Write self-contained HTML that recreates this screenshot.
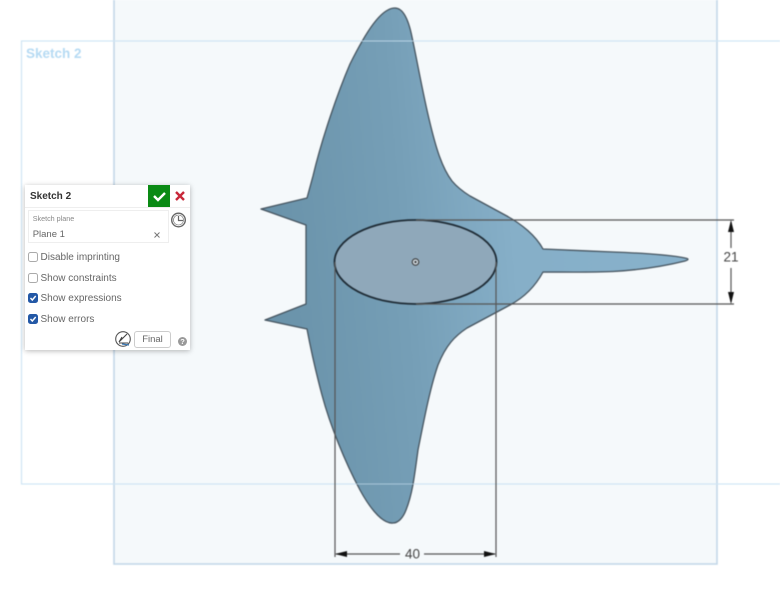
<!DOCTYPE html>
<html><head><meta charset="utf-8"><style>
html,body{margin:0;padding:0;background:#fff}
body{width:780px;height:597px;position:relative;overflow:hidden;font-family:"Liberation Sans",sans-serif}
svg.m{position:absolute;left:0;top:0;filter:blur(.45px)}
.p{position:absolute;left:25px;top:185px;width:165px;height:165px;background:#fff;box-shadow:0 1px 5px rgba(0,0,0,.28);filter:blur(.35px)}
.t{position:absolute;white-space:nowrap;color:#666;font-size:10px;line-height:12px}
.c{position:absolute;left:3px;width:10px;height:10px;border-radius:2.5px;box-sizing:border-box;border:1px solid #aaa;background:#fff}
.c.on{background:#2358a6;border-color:#2358a6}
.c svg{position:absolute;left:-1px;top:-1px}
</style></head><body>
<svg class="m" width="780" height="597" viewBox="0 0 780 597">
<defs><linearGradient id="g" x1="0" y1="0.1" x2="1" y2="0">
<stop offset="0" stop-color="#6a93aa"/><stop offset=".3" stop-color="#769fb7"/><stop offset=".55" stop-color="#86afc8"/><stop offset="1" stop-color="#88b2cc"/></linearGradient></defs>
<rect x="114" y="-3" width="603" height="567" fill="#f5f9fb" stroke="#c3d7e8" stroke-width="1.6"/>
<rect x="21.5" y="41" width="770" height="443" fill="none" stroke="#cfe5f4" stroke-width="1.2"/>
<text x="26" y="58" font-family="Liberation Sans,sans-serif" font-size="13.5" font-weight="700" fill="#b5daf3">Sketch 2</text>
<path d="M395 8C404 8 409 22 412 37C417 60 423 95 430 123C436 148 442 168 452 181C457 187 462 191 470 196L505 215C522 224 536 236 543 249C565 250 590 251 613 252C640 253 670 255 685 258Q691 259 685 261C665 266 640 270 613 271.500C590 272.500 565 272 543 272C536 285 525 297 510 305L467 328C455 336 446 345 438 365C430 388 424 420 418 450C414 480 412 495 406 510C403 518 398 523 393 523C384 524 372 512 360 490C345 462 330 425 322 395C314 365 310 345 307 329L265 320L306 304V225L261 209L307 198L313 176C322 138 338 92 350 64C366 32 381 8 395 8Z" fill="url(#g)" stroke="#45545f" stroke-width="1.3" stroke-linejoin="round"/>
<line x1="114" y1="41" x2="717" y2="41" stroke="#cfe5f4" stroke-width="1" opacity=".75"/>
<line x1="114" y1="484" x2="717" y2="484" stroke="#cfe5f4" stroke-width="1" opacity=".6"/>
<ellipse cx="415.500" cy="262" rx="81" ry="42" fill="#8fa8ba" stroke="#1f2c36" stroke-width="1.8"/>
<circle cx="415.500" cy="262" r="3.300" fill="#c9d2d8" stroke="#333" stroke-width="1"/><circle cx="415.500" cy="262" r="1" fill="#222"/>
<g stroke="#555" stroke-width="1.2" fill="none">
<path d="M416 220H734M416 304H734"/>
<path d="M335 262V557M496 262V557"/>
<path d="M731 222V248M731 268V302"/>
<path d="M336 554H400M424 554H495"/>
</g>
<g fill="#111"><path d="M731 220L728 232H734ZM731 304L728 292H734ZM335 554L347 551V557ZM496 554L484 551V557Z"/></g>
<text x="731" y="261.500" text-anchor="middle" font-family="Liberation Sans,sans-serif" font-size="13.500" fill="#444">21</text>
<text x="412.500" y="558.500" text-anchor="middle" font-family="Liberation Sans,sans-serif" font-size="13.500" fill="#444">40</text>
</svg>
<div class="p">
<div class="t" style="left:5px;top:5.500px;font-size:10px;font-weight:700;color:#333">Sketch 2</div>
<div style="position:absolute;left:0;top:22px;width:165px;height:1px;background:#eee"></div>
<div style="position:absolute;left:123px;top:0;width:22px;height:22px;background:#0a8a14"></div>
<svg style="position:absolute;left:123px;top:0" width="22" height="22"><path d="M6 11L10 15L17 8" fill="none" stroke="#fff" stroke-width="2.400"/></svg>
<svg style="position:absolute;left:149px;top:5px" width="12" height="12"><path d="M2 2L10 10M10 2L2 10" stroke="#c8283a" stroke-width="2.400"/></svg>
<div style="position:absolute;left:3px;top:25px;width:141px;height:33px;box-sizing:border-box;border:1px solid #eee"></div>
<div class="t" style="left:7.700px;top:29px;font-size:7.200px;line-height:10px;color:#888">Sketch plane</div>
<div class="t" style="left:7.700px;top:43.500px;font-size:9.500px;color:#666">Plane 1</div>
<svg style="position:absolute;left:128px;top:45.500px" width="8" height="8"><path d="M1.500 1.500L6.500 6.500M6.500 1.500L1.500 6.500" stroke="#777" stroke-width="1"/></svg>
<svg style="position:absolute;left:145px;top:26px" width="18" height="18" fill="none" stroke="#666"><circle cx="8.500" cy="9" r="6.800" stroke-width="1.400"/><circle cx="8.500" cy="9" r="5" stroke-width=".6"/><path d="M8.500 5V9.500H13" stroke-width="1.200"/></svg>
<div class="c" style="top:67px"></div><div class="t" style="left:15.500px;top:66.500px">Disable imprinting</div>
<div class="c" style="top:88px"></div><div class="t" style="left:15.500px;top:87.500px">Show constraints</div>
<div class="c on" style="top:108px"><svg width="10" height="10"><path d="M2.500 5L4.300 7L7.700 3" fill="none" stroke="#fff" stroke-width="1.400"/></svg></div><div class="t" style="left:15.500px;top:107.500px">Show expressions</div>
<div class="c on" style="top:129px"><svg width="10" height="10"><path d="M2.500 5L4.300 7L7.700 3" fill="none" stroke="#fff" stroke-width="1.400"/></svg></div><div class="t" style="left:15.500px;top:128.500px">Show errors</div>
<svg style="position:absolute;left:89px;top:145px" width="18" height="18" fill="none"><circle cx="9" cy="9" r="7.300" stroke="#555" stroke-width="1.100"/><path d="M5 12L13 4M5 12L8 7M5 13H14" stroke="#444" stroke-width="1.100"/><path d="M8 14L15 15" stroke="#3a7ab8" stroke-width="1.200"/></svg>
<div style="position:absolute;left:109px;top:146px;width:37px;height:17px;box-sizing:border-box;border:1px solid #ccc;border-radius:3px;background:#fff;color:#666;font-size:9.500px;line-height:15px;text-align:center">Final</div>
<div style="position:absolute;left:153px;top:152px;width:9px;height:9px;border-radius:50%;background:#999;color:#fff;font-size:7.500px;font-weight:700;line-height:9px;text-align:center">?</div>
</div>
</body></html>
